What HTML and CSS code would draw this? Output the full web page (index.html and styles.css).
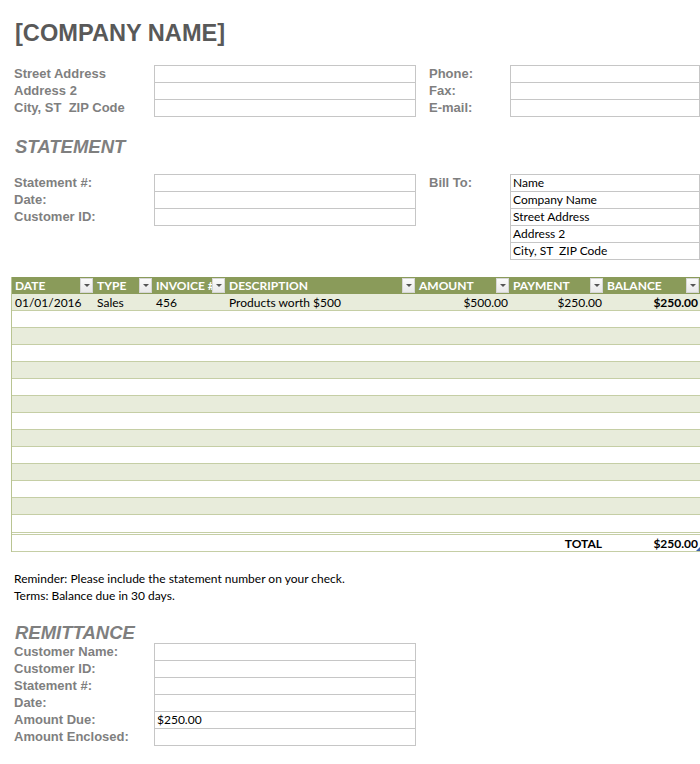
FILE: index.html
```html
<!DOCTYPE html>
<html lang="en">
<head>
  <meta charset="UTF-8" />
  <meta name="viewport" content="width=device-width, initial-scale=1">
  <title>Statement</title>
  <link rel="stylesheet" href="styles.css">
</head>
<body>
  <div class="sheet">
    <h1 class="company">[COMPANY NAME]</h1>

    <!-- Company contact block -->
    <section class="info-grid">
      <div class="labels">
        <div class="label">Street Address</div>
        <div class="label">Address 2</div>
        <div class="label">City, ST&nbsp; ZIP Code</div>
      </div>
      <div class="boxes">
        <div class="cell"></div>
        <div class="cell"></div>
        <div class="cell"></div>
      </div>
      <div class="labels side">
        <div class="label">Phone:</div>
        <div class="label">Fax:</div>
        <div class="label">E-mail:</div>
      </div>
      <div class="boxes">
        <div class="cell"></div>
        <div class="cell"></div>
        <div class="cell"></div>
      </div>
    </section>

    <h2 class="section-title statement-title">STATEMENT</h2>

    <section class="info-grid">
      <div class="labels">
        <div class="label">Statement #:</div>
        <div class="label">Date:</div>
        <div class="label">Customer ID:</div>
      </div>
      <div class="boxes">
        <div class="cell"></div>
        <div class="cell"></div>
        <div class="cell"></div>
      </div>
      <div class="labels side">
        <div class="label">Bill To:</div>
      </div>
      <div class="boxes">
        <div class="cell">Name</div>
        <div class="cell">Company Name</div>
        <div class="cell">Street Address</div>
        <div class="cell">Address 2</div>
        <div class="cell">City, ST&nbsp; ZIP Code</div>
      </div>
    </section>

    <!-- Ledger table -->
    <div class="ledger-wrap">
      <table class="ledger">
        <colgroup>
          <col class="c-date"><col class="c-type"><col class="c-inv"><col class="c-desc">
          <col class="c-amt"><col class="c-pay"><col class="c-bal">
        </colgroup>
        <thead>
          <tr>
            <th><span class="th-in"><span class="th-text">DATE</span><span class="drop"></span></span></th>
            <th><span class="th-in"><span class="th-text">TYPE</span><span class="drop"></span></span></th>
            <th><span class="th-in"><span class="th-text">INVOICE #</span><span class="drop"></span></span></th>
            <th><span class="th-in"><span class="th-text">DESCRIPTION</span><span class="drop"></span></span></th>
            <th><span class="th-in"><span class="th-text">AMOUNT</span><span class="drop"></span></span></th>
            <th><span class="th-in"><span class="th-text">PAYMENT</span><span class="drop"></span></span></th>
            <th><span class="th-in"><span class="th-text">BALANCE</span><span class="drop"></span></span></th>
          </tr>
        </thead>
        <tbody>
          <tr>
            <td>01/01/2016</td><td>Sales</td><td>456</td><td>Products worth $500</td>
            <td class="num">$500.00</td><td class="num">$250.00</td><td class="num bold">$250.00</td>
          </tr>
          <tr><td></td><td></td><td></td><td></td><td></td><td></td><td></td></tr>
          <tr><td></td><td></td><td></td><td></td><td></td><td></td><td></td></tr>
          <tr><td></td><td></td><td></td><td></td><td></td><td></td><td></td></tr>
          <tr><td></td><td></td><td></td><td></td><td></td><td></td><td></td></tr>
          <tr><td></td><td></td><td></td><td></td><td></td><td></td><td></td></tr>
          <tr><td></td><td></td><td></td><td></td><td></td><td></td><td></td></tr>
          <tr><td></td><td></td><td></td><td></td><td></td><td></td><td></td></tr>
          <tr><td></td><td></td><td></td><td></td><td></td><td></td><td></td></tr>
          <tr><td></td><td></td><td></td><td></td><td></td><td></td><td></td></tr>
          <tr><td></td><td></td><td></td><td></td><td></td><td></td><td></td></tr>
          <tr><td></td><td></td><td></td><td></td><td></td><td></td><td></td></tr>
          <tr><td></td><td></td><td></td><td></td><td></td><td></td><td></td></tr>
          <tr class="last"><td></td><td></td><td></td><td></td><td></td><td></td><td></td></tr>
        </tbody>
        <tfoot>
          <tr>
            <td></td><td></td><td></td><td></td><td></td>
            <td class="num bold">TOTAL</td><td class="num bold">$250.00</td>
          </tr>
        </tfoot>
      </table>
    </div>

    <div class="notes">
      <p>Reminder: Please include the statement number on your check.</p>
      <p>Terms: Balance due in 30 days.</p>
    </div>

    <h2 class="section-title remit-title">REMITTANCE</h2>

    <section class="remit-grid">
      <div class="labels">
        <div class="label">Customer Name:</div>
        <div class="label">Customer ID:</div>
        <div class="label">Statement #:</div>
        <div class="label">Date:</div>
        <div class="label">Amount Due:</div>
        <div class="label">Amount Enclosed:</div>
      </div>
      <div class="boxes">
        <div class="cell"></div>
        <div class="cell"></div>
        <div class="cell"></div>
        <div class="cell"></div>
        <div class="cell">$250.00</div>
        <div class="cell"></div>
      </div>
    </section>
  </div>
</body>
</html>
```

FILE: styles.css
```css
/* Base */
* {
  box-sizing: border-box;
}
body {
  margin: 0;
  background: #fff;
  font-family: "Liberation Sans", Arial, sans-serif;
}
.sheet {
  width: 700px;
  padding-bottom: 20px;
}

/* Headings */
.company {
  margin: 0 0 18px;
  padding: 19px 0 0 15px;
  font-size: 23.6px;
  line-height: 28px;
  font-weight: bold;
  color: #595959;
}
.section-title {
  margin: 0;
  padding-left: 15px;
  font-size: 18.5px;
  line-height: 21px;
  font-weight: bold;
  font-style: italic;
  color: #7f7f7f;
}
.statement-title {
  margin: 19px 0 17px;
}
.remit-title {
  margin: 18px 0 0;
}

/* Label / box grids */
.info-grid {
  display: grid;
  grid-template-columns: 140px 262px 94px 190px;
  padding-left: 14px;
  align-items: start;
}
.remit-grid {
  display: grid;
  grid-template-columns: 140px 262px;
  padding-left: 14px;
  align-items: start;
}
.label {
  height: 17px;
  line-height: 17px;
  font-size: 13px;
  font-weight: bold;
  color: #7f7f7f;
  white-space: nowrap;
}
.labels.side {
  padding-left: 13px;
}
.boxes .cell {
  height: 17px;
  border: 1px solid #c6c6c6;
  border-top: none;
  padding-left: 2px;
  font-family: Lato, "Liberation Sans", sans-serif;
  font-size: 12px;
  line-height: 16px;
  color: #000;
  white-space: nowrap;
}
.boxes .cell:first-child {
  height: 18px;
  border-top: 1px solid #c6c6c6;
}

/* Ledger table */
.ledger-wrap {
  position: relative;
  margin: 17px 0 0 11px;
  width: 689px;
}
.ledger-wrap::after {
  content: "";
  position: absolute;
  right: 0;
  bottom: 1px;
  border-left: 4px solid transparent;
  border-bottom: 4px solid #3a5fa8;
}
.ledger {
  width: 689px;
  table-layout: fixed;
  border-collapse: separate;
  border-spacing: 0;
  border-left: 1px solid #b9c492;
  font-family: Lato, "Liberation Sans", sans-serif;
  font-size: 12px;
  color: #000;
}
.c-date { width: 82px; }
.c-type { width: 59px; }
.c-inv { width: 73px; }
.c-desc { width: 190px; }
.c-amt { width: 94px; }
.c-pay { width: 94px; }
.c-bal { width: 96px; }

.ledger th {
  height: 17px;
  padding: 0 1px 0 3px;
  background: #8a9b5a;
  color: #fff;
  font-weight: bold;
  text-align: left;
}
.th-in {
  display: flex;
  align-items: center;
  height: 17px;
}
.th-text {
  flex: 1;
  min-width: 0;
  white-space: nowrap;
  line-height: 18px;
}
.drop {
  flex: none;
  position: relative;
  width: 13px;
  height: 15px;
  background: linear-gradient(#fbfbfb, #e9e9e9);
  border: 1px solid #d6d6d6;
  display: flex;
  align-items: center;
  justify-content: center;
}
.drop::before {
  content: "";
  border-left: 3px solid transparent;
  border-right: 3px solid transparent;
  border-top: 3px solid #555;
}
.ledger td {
  height: 17px;
  padding: 1px 2px 0 3px;
  border-bottom: 1px solid #c5cea5;
  line-height: 15px;
  white-space: nowrap;
}
.ledger tbody tr:nth-child(odd) td {
  background: #e8ecdb;
}
.ledger tbody tr.last td {
  height: 20px;
  border-bottom: 3px double #c5cea5;
}
.ledger tfoot td {
  height: 17px;
  padding-top: 2px;
  line-height: 14px;
  border-bottom: 1px solid #c5cea5;
}
.ledger .num {
  text-align: right;
}
.ledger .bold {
  font-weight: bold;
}

/* Notes */
.notes {
  margin: 18px 0 0 14px;
  font-family: Lato, "Liberation Sans", sans-serif;
  font-size: 12px;
  line-height: 17px;
  color: #000;
}
.notes p {
  margin: 0;
}
```
